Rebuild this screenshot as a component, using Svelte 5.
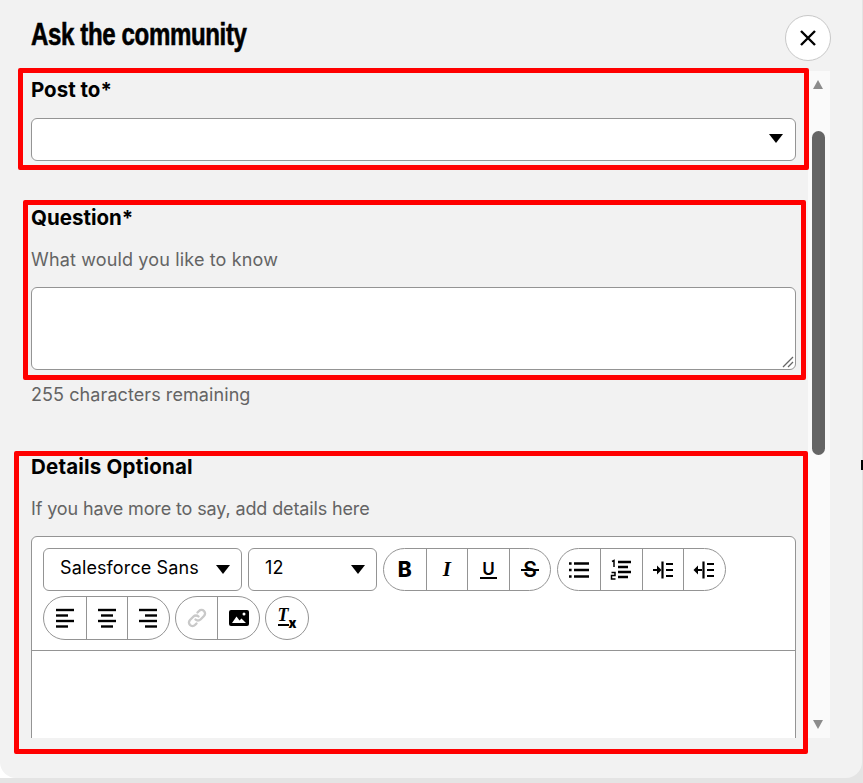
<script>
  let remaining = 255;

  // line positions for the three align icons: [x1, x2] per row
  const aligns = [
    { name: "left", rows: [[1, 19], [1, 13], [1, 19], [1, 13]] },
    { name: "center", rows: [[1, 19], [4, 16], [1, 19], [4, 16]] },
    { name: "right", rows: [[1, 19], [7, 19], [1, 19], [7, 19]] },
  ];
  const rowY = [2, 7.5, 13, 18.5];
</script>

<div class="modal">
  <header>
    <h1>Ask the community</h1>
    <button class="close" aria-label="Close">
      <svg width="18" height="18" viewBox="0 0 18 18"><path d="M2 2 16 16M16 2 2 16" stroke="#000" stroke-width="2.4" fill="none" /></svg>
    </button>
  </header>

  <div class="scroller">
    <div class="content">
      <div class="field post">
        <label for="post">Post to*</label>
        <div class="select-wrap">
          <select id="post"></select>
          <span class="caret"></span>
        </div>
      </div>

      <div class="field question">
        <label for="q">Question*</label>
        <p class="hint know">What would you like to know</p>
        <div class="area-wrap">
          <textarea id="q"></textarea>
          <svg class="grip" width="12" height="12" viewBox="0 0 12 12" stroke="#666" stroke-width="1.300">
            <path d="M1 11 11 1M6 11l5-5" />
          </svg>
        </div>
        <p class="hint count">{remaining} characters remaining</p>
      </div>

      <div class="field details">
        <label for="details" class="long">Details Optional</label>
        <p class="hint more">If you have more to say, add details here</p>
        <div class="editor">
          <div class="toolbar">
            <div class="tb-select font">Salesforce Sans<span class="caret small"></span></div>
            <div class="tb-select size">12<span class="caret small"></span></div>

            <div class="group">
              <button class="glyph bold">B</button>
              <button class="glyph italic">I</button>
              <button class="glyph under">U</button>
              <button class="glyph strike">S</button>
            </div>

            <div class="group">
              <button aria-label="Bullets">
                <svg width="22" height="20" viewBox="0 0 22 20" fill="none" stroke="#000" stroke-width="2.400">
                  <path d="M6 3.500h15M6 10h15M6 16.500h15" />
                  <path d="M1 3.500h2.600M1 10h2.600M1 16.500h2.600" stroke-width="2.600" />
                </svg>
              </button>
              <button aria-label="Numbered list">
                <svg width="22" height="22" viewBox="0 0 22 22" fill="none" stroke="#000" stroke-width="1.500">
                  <path d="M2 2.500 4 1.500V8M1.500 13.500H5V16.500H1.500V20H5.500" />
                  <path d="M8 3h13M8 8h10M8 13h13M8 18h10" stroke-width="2.400" />
                </svg>
              </button>
              <button aria-label="Indent">
                <svg width="22" height="20" viewBox="0 0 22 20" fill="none" stroke="#000" stroke-width="2.200">
                  <path d="M1 10h5M10.500 1.500v17M14 4h7M14 10h7M14 16h7" />
                  <path d="M5 5.500 9.500 10 5 14.500z" fill="#000" stroke="none" />
                </svg>
              </button>
              <button aria-label="Outdent">
                <svg width="22" height="20" viewBox="0 0 22 20" fill="none" stroke="#000" stroke-width="2.200">
                  <path d="M4 10h5M10.500 1.500v17M14 4h7M14 10h7M14 16h7" />
                  <path d="M5 5.500.5 10 5 14.500z" fill="#000" stroke="none" />
                </svg>
              </button>
            </div>

            <div class="group">
              {#each aligns as a}
                <button aria-label={"Align " + a.name}>
                  <svg width="20" height="20" viewBox="0 0 20 20" stroke="#000" stroke-width="2.400">
                    {#each a.rows as r, i}
                      <line x1={r[0]} x2={r[1]} y1={rowY[i]} y2={rowY[i]} />
                    {/each}
                  </svg>
                </button>
              {/each}
            </div>

            <div class="group">
              <button aria-label="Link">
                <svg width="22" height="22" viewBox="0 0 22 22" fill="none" stroke="#c9c9c9" stroke-width="2.400" stroke-linecap="round">
                  <path d="M9.500 12.500a3.500 3.500 0 0 0 5 0l3.500-3.500a3.500 3.500 0 0 0-5-5l-1.500 1.500" />
                  <path d="M12.500 9.500a3.500 3.500 0 0 0-5 0L4 13a3.500 3.500 0 0 0 5 5l1.500-1.500" />
                </svg>
              </button>
              <button aria-label="Image">
                <svg width="22" height="20" viewBox="0 0 22 20">
                  <rect x="1" y="2" width="20" height="16" rx="2" fill="#000" />
                  <path d="M4 15 8.500 8.500l3 4 2-2L18 15z" fill="#fff" />
                  <circle cx="16" cy="6" r="1.500" fill="#fff" />
                </svg>
              </button>
            </div>

            <div class="group">
              <button class="clear" aria-label="Clear formatting">
                <span class="t">T</span><span class="x">x</span>
              </button>
            </div>
          </div>
          <div class="area" id="details"></div>
        </div>
      </div>
    </div>

    <div class="track">
      <span class="arrow up"></span>
      <div class="thumb"></div>
      <span class="arrow down"></span>
    </div>
  </div>

  <!-- red annotation boxes drawn on top of the screenshot -->
  <div class="mark m1"></div>
  <div class="mark m2"></div>
  <div class="mark m3"></div>
  <div class="tick"></div>
  <div class="edge"></div>
</div>

<style>
  :global(body) {
    background: linear-gradient(#fff, #fff) 0 758px / 20px 20px no-repeat, #e4e4e4;
    font-family: Inter, "Liberation Sans", sans-serif;
    overflow: hidden;
  }

  .modal {
    position: relative;
    box-sizing: border-box;
    width: 862px;
    height: 778px;
    background: #f2f2f2;
    border-radius: 0 0 16px 16px;
    display: flex;
    flex-direction: column;
  }

  .edge {
    position: absolute;
    left: 0;
    top: 778px;
    width: 720px;
    height: 1px;
    background: linear-gradient(90deg, #b5b5b5 90%, #e4e4e4);
  }

  header {
    height: 71px;
    flex: none;
    display: flex;
    justify-content: space-between;
    align-items: flex-start;
    padding: 15px 31px 0 31px;
    box-sizing: border-box;
  }

  h1 {
    margin: 0;
    font-family: "Liberation Sans", sans-serif;
    font-size: 32px;
    line-height: 38px;
    font-weight: 700;
    color: #000;
    letter-spacing: -0.5px;
    white-space: nowrap;
    -webkit-text-stroke: 0.6px #000;
    transform: scaleX(0.752);
    transform-origin: left;
  }

  .close {
    width: 46px;
    height: 46px;
    border-radius: 50%;
    border: 1px solid #c8c8c8;
    background: #fff;
    padding: 0;
    display: flex;
    align-items: center;
    justify-content: center;
  }

  .scroller {
    height: 667px;
    display: flex;
    overflow: hidden;
    flex: none;
  }

  .content {
    width: 808px;
    box-sizing: border-box;
    padding: 7px 12px 0 31px;
    overflow: hidden;
  }

  .field label {
    display: block;
    font-size: 20.5px;
    line-height: 24px;
    font-weight: 700;
    color: #000;
  }

  .field label.long {
    letter-spacing: 0.2px;
  }

  .post { margin-bottom: 45px; }
  .question { margin-bottom: 47px; }

  .select-wrap {
    position: relative;
    margin-top: 16px;
  }

  select {
    display: block;
    appearance: none;
    width: 100%;
    height: 43px;
    box-sizing: border-box;
    background: #fff;
    border: 1px solid #949494;
    border-radius: 6px;
  }

  .caret {
    position: absolute;
    right: 13px;
    top: 16px;
    border-left: 7.5px solid transparent;
    border-right: 7.5px solid transparent;
    border-top: 9px solid #000;
  }

  .hint {
    margin: 17px 0 0;
    font-size: 18px;
    line-height: 26px;
    color: #646464;
  }

  .know { letter-spacing: 0.15px; }
  .more { letter-spacing: -0.13px; }

  .area-wrap {
    position: relative;
    margin-top: 14px;
  }

  textarea {
    display: block;
    width: 100%;
    height: 83px;
    box-sizing: border-box;
    background: #fff;
    border: 1px solid #949494;
    border-radius: 6px;
    resize: none;
  }

  .grip {
    position: absolute;
    right: 2px;
    bottom: 2px;
  }

  .count {
    margin-top: 12px;
    letter-spacing: 0.08px;
  }

  .editor {
    margin-top: 14px;
    border: 1px solid #949494;
    border-radius: 6px 6px 0 0;
    background: #fff;
    height: 240px;
  }

  .toolbar {
    display: flex;
    flex-wrap: wrap;
    gap: 5px 6px;
    padding: 11px 11px 10px;
    border-bottom: 1px solid #949494;
  }

  .tb-select {
    position: relative;
    box-sizing: border-box;
    height: 43px;
    border: 1px solid #949494;
    border-radius: 6px;
    font-size: 18px;
    line-height: 38px;
    padding-left: 16px;
    color: #000;
    letter-spacing: 0.12px;
  }

  .tb-select.font { width: 199px; }
  .tb-select.size { width: 129px; }

  .caret.small {
    right: 11px;
    top: 16px;
  }

  .group {
    display: flex;
    height: 43px;
    box-sizing: border-box;
    border: 1px solid #949494;
    border-radius: 22px;
  }

  .toolbar .group:nth-of-type(n + 5) {
    height: 44px;
  }

  .toolbar .group:nth-of-type(n + 6) {
    margin-left: -1px;
  }

  .group button {
    box-sizing: border-box;
    width: 41.6px;
    height: 100%;
    padding: 0;
    border: 0;
    border-left: 1px solid #949494;
    background: transparent;
    display: flex;
    align-items: center;
    justify-content: center;
    color: #000;
    position: relative;
  }

  .group button:first-child {
    border-left: 0;
  }

  .group button.clear {
    width: 42px;
  }

  .group button svg {
    display: block;
  }

  .glyph {
    font-size: 21px;
    line-height: 1;
  }

  .bold {
    font-family: Inter, sans-serif;
    font-weight: 800;
  }

  .italic {
    font-family: "Liberation Serif", serif;
    font-style: italic;
    font-weight: 700;
  }

  .under {
    font-family: Inter, sans-serif;
    font-weight: 600;
    font-size: 17px;
  }

  .under::after {
    content: "";
    position: absolute;
    left: 12px;
    right: 12px;
    bottom: 11px;
    height: 2px;
    background: #000;
  }

  .strike {
    font-family: Inter, sans-serif;
    font-weight: 600;
  }

  .strike::after {
    content: "";
    position: absolute;
    left: 11px;
    right: 11px;
    top: 20px;
    height: 2px;
    background: #000;
  }

  .clear .t {
    font-family: "Liberation Serif", serif;
    font-style: italic;
    font-weight: 700;
    font-size: 18px;
    line-height: 1;
    border-bottom: 2px solid #000;
    margin-top: -5px;
  }

  .clear .x {
    font-family: Inter, sans-serif;
    font-weight: 900;
    font-size: 13px;
    line-height: 1;
    margin-top: 10px;
  }

  .track {
    width: 22px;
    position: relative;
    background: #fafafa;
    flex: none;
  }

  .thumb {
    position: absolute;
    left: 4px;
    top: 60px;
    width: 13px;
    height: 324px;
    background: #656565;
    border-radius: 7px;
  }

  .arrow {
    position: absolute;
    left: 5px;
    border-left: 5.500px solid transparent;
    border-right: 5.500px solid transparent;
  }

  .arrow.up {
    top: 9px;
    border-bottom: 9px solid #8c8c8c;
  }

  .arrow.down {
    bottom: 9px;
    border-top: 9px solid #8c8c8c;
  }

  .mark {
    position: absolute;
    box-sizing: border-box;
    border: 5px solid #ff0000;
    border-radius: 2px;
    pointer-events: none;
  }

  .m1 { left: 18px; top: 68px; width: 791px; height: 102px; }
  .m2 { left: 23px; top: 200px; width: 783px; height: 180px; }
  .m3 { left: 14px; top: 451px; width: 794px; height: 303px; }

  .tick {
    position: absolute;
    left: 861px;
    top: 460px;
    width: 2px;
    height: 10px;
    background: #000;
  }
</style>
